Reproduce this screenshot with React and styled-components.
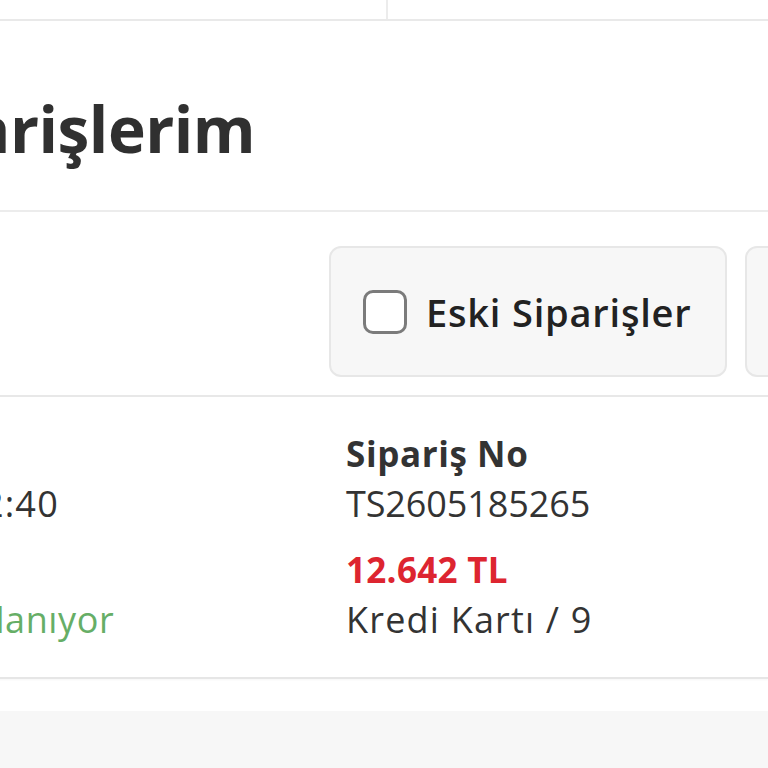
import React from 'react'
import styled, { createGlobalStyle } from 'styled-components'

const GlobalStyle = createGlobalStyle`
  html, body {
    margin: 0;
    padding: 0;
    background: #ffffff;
    overflow: hidden;
  }
  body {
    font-family: 'Open Sans', 'Noto Sans', sans-serif;
    color: #333333;
  }
`

const OFFSET = 260

const Page = styled.div`
  width: ${768 + OFFSET}px;
  margin-left: -${OFFSET}px;
  overflow: hidden;
  background: #ffffff;
`

const TabBar = styled.div`
  display: flex;
  height: 19px;
  border-bottom: 2px solid #e9e9e9;
`

const Tab = styled.div`
  flex: ${p => (p.$first ? `0 0 ${386 + OFFSET}px` : '1')};
  border-right: ${p => (p.$first ? '2px solid #ececec' : 'none')};
`

const Header = styled.div`
  padding: 76px 0 49px 138px;
  border-bottom: 2px solid #ececec;
`

const Title = styled.h1`
  margin: 0;
  font-size: 64px;
  line-height: 64px;
  font-weight: 700;
  color: #303030;
  letter-spacing: -0.5px;
`

const FilterRow = styled.div`
  display: flex;
  gap: 18px;
  padding: 34px 0 18px ${329 + OFFSET}px;
  border-bottom: 2px solid #e8e8e8;
`

const FilterBox = styled.label`
  flex: 0 0 auto;
  display: flex;
  align-items: center;
  gap: 19px;
  height: 127px;
  padding: 0 33px 0 32px;
  background: #f7f7f7;
  border: 2px solid #e7e7e7;
  border-radius: 12px;
`

const Check = styled.span`
  width: 38px;
  height: 38px;
  border: 3px solid #7b7b7b;
  border-radius: 10px;
  background: #ffffff;
`

const FilterText = styled.span`
  font-size: 38px;
  font-weight: 600;
  color: #222222;
  letter-spacing: 0.8px;
`

const OrderCard = styled.div`
  display: grid;
  grid-template-columns: ${346 + 245}px 1fr;
  padding: 32px 0 32px 15px;
  border-bottom: 2px solid #e6e6e6;
  box-shadow: 0 1px 2px rgba(0, 0, 0, 0.04);
`

const Column = styled.div`
  display: flex;
  flex-direction: column;
`

const Group = styled.div`
  & + & {
    margin-top: 16px;
  }
`

const Label = styled.div`
  font-size: 35px;
  line-height: 50px;
  font-weight: 700;
  color: ${p => p.$color || '#333333'};
  letter-spacing: ${p => p.$spacing || '0.6px'};
`

const Value = styled.div`
  font-size: 36px;
  line-height: 50px;
  font-weight: 400;
  color: ${p => p.$color || '#333333'};
  letter-spacing: ${p => p.$spacing || '0.6px'};
`

const Spacer = styled.div`
  height: 32px;
`

const Footer = styled.div`
  height: 60px;
  background: #f7f7f7;
`

export default function App() {
  return (
    <>
      <GlobalStyle />
      <Page>
        <TabBar>
          <Tab $first />
          <Tab />
        </TabBar>
        <Header>
          <Title>Siparişlerim</Title>
        </Header>
        <FilterRow>
          <FilterBox>
            <Check />
            <FilterText>Eski Siparişler</FilterText>
          </FilterBox>
          <FilterBox>
            <Check />
            <FilterText>İptal Edilenler</FilterText>
          </FilterBox>
        </FilterRow>
        <OrderCard>
          <Column>
            <Group>
              <Label>Sipariş Tarihi</Label>
              <Value $spacing="1.2px">18.05.2026 12:40</Value>
            </Group>
            <Group>
              <Label>Durum</Label>
              <Value $color="#66ae66">Kargoya Hazırlanıyor</Value>
            </Group>
          </Column>
          <Column>
            <Group>
              <Label>Sipariş No</Label>
              <Value $spacing="-0.1px">TS2605185265</Value>
            </Group>
            <Group>
              <Label $color="#dd2530" $spacing="0.3px">12.642 TL</Label>
              <Value $spacing="1.2px">Kredi Kartı / 9</Value>
            </Group>
          </Column>
        </OrderCard>
        <Spacer />
        <Footer />
      </Page>
    </>
  )
}
